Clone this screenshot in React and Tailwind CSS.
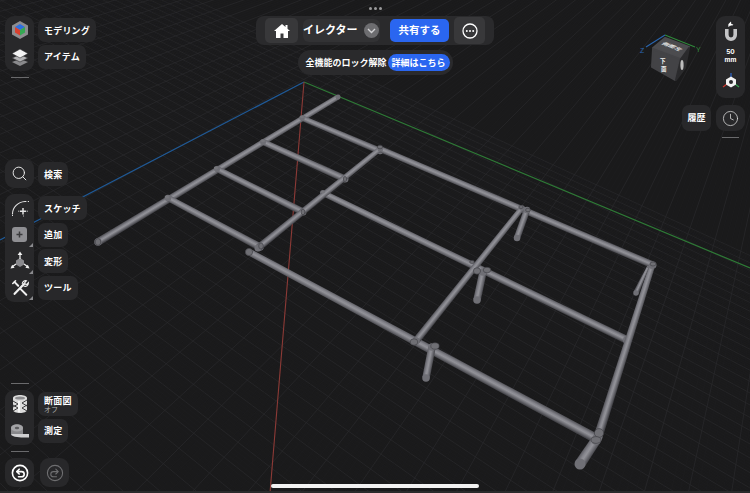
import React from "react";
import { Search, Clock } from "lucide-react";

const JP = "font-['Inter','Noto_Sans_CJK_JP',sans-serif]";

// vanishing points read off the beams
const VP_G = [-1121, -606];
const VP_B = [841, -210];
const DIR = [0.98, 0.198];

function gridLines(vp, spacing, count) {
  return Array.from({ length: count * 2 + 1 }, (_, i) => {
    const k = i - count;
    const px = 375 + k * spacing * DIR[0];
    const py = 640 + k * spacing * DIR[1];
    const ex = vp[0] + (px - vp[0]) * 1.6;
    const ey = vp[1] + (py - vp[1]) * 1.6;
    return { k, x1: vp[0], y1: vp[1], x2: ex, y2: ey };
  });
}

function Tube({ id, a, b, w1, w2 }) {
  const dx = b[0] - a[0];
  const dy = b[1] - a[1];
  const len = Math.hypot(dx, dy);
  const nx = -dy / len;
  const ny = dx / len;
  const s = ny > 0 ? -1 : 1;
  const w = (w1 + w2) / 2;
  const mx = (a[0] + b[0]) / 2;
  const my = (a[1] + b[1]) / 2;
  const pts = [
    [a[0] + (nx * w1) / 2, a[1] + (ny * w1) / 2],
    [b[0] + (nx * w2) / 2, b[1] + (ny * w2) / 2],
    [b[0] - (nx * w2) / 2, b[1] - (ny * w2) / 2],
    [a[0] - (nx * w1) / 2, a[1] - (ny * w1) / 2],
  ];
  return (
    <g>
      <linearGradient
        id={id}
        gradientUnits="userSpaceOnUse"
        x1={mx + (nx * s * w) / 2}
        y1={my + (ny * s * w) / 2}
        x2={mx - (nx * s * w) / 2}
        y2={my - (ny * s * w) / 2}
      >
        <stop offset="0" stopColor="#5c5c62" />
        <stop offset="0.3" stopColor="#85858c" />
        <stop offset="0.5" stopColor="#929298" />
        <stop offset="0.75" stopColor="#6e6e74" />
        <stop offset="1" stopColor="#47474c" />
      </linearGradient>
      <polygon points={pts.map((p) => p.join(",")).join(" ")} fill={`url(#${id})`} />
      <circle cx={a[0]} cy={a[1]} r={w1 / 2} fill="#6f6f75" />
      <circle cx={b[0]} cy={b[1]} r={w2 / 2} fill="#6f6f75" />
    </g>
  );
}

const tubes = [
  { a: [98, 242], b: [338, 97], w1: 7.5, w2: 5 },
  { a: [302, 118], b: [380, 151], w1: 5.5, w2: 6.5 },
  { a: [263, 142], b: [345, 179], w1: 6, w2: 7 },
  { a: [217, 169], b: [303, 212], w1: 6, w2: 7 },
  { a: [168, 198], b: [260, 247], w1: 6.5, w2: 7.5 },
  { a: [380, 149], b: [653, 265], w1: 6, w2: 7 },
  { a: [323, 193], b: [627, 340], w1: 6, w2: 8 },
  { a: [249, 252], b: [597, 439], w1: 7, w2: 9.5 },
  { a: [380, 149], b: [258, 248], w1: 5, w2: 7 },
  { a: [522, 208], b: [416, 341], w1: 5.5, w2: 7.5 },
  { a: [652, 266], b: [598, 437], w1: 6, w2: 9 },
  { a: [527, 210], b: [517, 238], w1: 6.5, w2: 6.5 },
  { a: [483, 272], b: [477, 300], w1: 7.5, w2: 7.5 },
  { a: [648, 267], b: [636, 293], w1: 2.5, w2: 5.5 },
  { a: [432, 347], b: [426, 378], w1: 7.5, w2: 7.5 },
  { a: [596, 440], b: [580, 464], w1: 10, w2: 11 },
];

const caps = [
  [98, 242, 2.8, 3.4], [249, 252, 3.6, 3.6], [261, 246, 2.3, 3], [303, 212, 1.8, 2.8],
  [345, 179, 1.6, 2.6], [380, 147, 2.6, 1.8], [477, 271, 3.6, 3.2], [487, 270, 3.8, 2.8],
  [528, 210, 2.4, 1.8], [521, 207, 2.2, 1.5], [472, 262, 2.4, 1.4], [653, 264, 3, 2],
  [414, 342, 3.8, 3.2], [435, 346, 4.2, 3.2], [599, 433, 4.6, 4.4], [596, 440, 5, 3.4],
];

// small joint marks, barely darker than the tube
const joints = [
  [302, 117, 2, 1.2], [263, 141, 2, 1.2], [216, 168, 2.2, 1.4], [167, 197, 2.4, 1.5], [323, 192, 2, 1.2],
];

function Scene() {
  const families = [VP_G, VP_B];
  return (
    <svg className="absolute inset-0" width="750" height="493" viewBox="0 0 750 493">
      {families.map((vp, f) =>
        gridLines(vp, 11, 200).map((l) => (
          <line
            key={`${f}-${l.k}`}
            x1={l.x1}
            y1={l.y1}
            x2={l.x2}
            y2={l.y2}
            stroke={l.k % 5 === 0 ? "#2a2a2c" : "#1f1f21"}
            strokeWidth={l.k % 5 === 0 ? 0.7 : 0.5}
          />
        ))
      )}
      <line x1="304" y1="82" x2="0" y2="240" stroke="#1f5a98" strokeWidth="1.2" />
      <line x1="304" y1="82" x2="750" y2="268" stroke="#2e7a36" strokeWidth="1.2" />
      <line x1="304" y1="82" x2="270" y2="493" stroke="#8c3a36" strokeWidth="1.1" />
      <g className="blur-[0.4px]">
        {tubes.map((t, i) => (
          <Tube key={i} id={`tube-${i}`} {...t} />
        ))}
        {joints.map(([x, y, rx, ry], i) => (
          <ellipse key={i} cx={x} cy={y} rx={rx} ry={ry} fill="#77777c" />
        ))}
        {caps.map(([x, y, rx, ry], i) => (
          <ellipse key={i} cx={x} cy={y} rx={rx} ry={ry} fill="#6f6f74" stroke="#3d3d41" strokeWidth="0.6" />
        ))}
      </g>
    </svg>
  );
}

function Cube() {
  return (
    <svg className="absolute left-[636px] top-[28px]" width="68" height="60" viewBox="636 28 68 60">
      <line x1="665" y1="35" x2="646" y2="47" stroke="#2a66b0" strokeWidth="1.1" />
      <line x1="665" y1="35" x2="695" y2="47" stroke="#2f8a3a" strokeWidth="1.1" />
      <text x="640" y="53" fontSize="7" fill="#2a66b0" fontFamily="Liberation Sans">Z</text>
      <text x="696" y="52" fontSize="7" fill="#2f8a3a" fontFamily="Liberation Sans">Y</text>
      <polygon points="665,38 689,47 680,58 653,48" fill="#4c4c4f" stroke="#4c4c4f" strokeWidth="2" strokeLinejoin="round" />
      <polygon points="653,49 680,59 675,80 652,67" fill="#434346" stroke="#434346" strokeWidth="2" strokeLinejoin="round" />
      <polygon points="681,59 689,48 685,68 676,80" fill="#2b2b2d" stroke="#2b2b2d" strokeWidth="2" strokeLinejoin="round" />
      <ellipse cx="682" cy="65" rx="1.6" ry="5" fill="#bdbdbd" />
      <text transform="matrix(0.95 0.36 -0.75 0.42 661 44)" fontSize="6.5" fontWeight="700" fill="#e8e8e8" fontFamily="Noto Sans CJK JP">側面左</text>
      <text transform="translate(660 63)" fontSize="5.5" fontWeight="700" fill="#efefef" fontFamily="Noto Sans CJK JP">下</text>
      <text transform="translate(661 71)" fontSize="5.5" fontWeight="700" fill="#efefef" fontFamily="Noto Sans CJK JP">面</text>
    </svg>
  );
}

function LogoIcon() {
  return (
    <svg width="18" height="20" viewBox="0 0 18 20">
      <polygon points="9,1 17,5.5 17,14.5 9,19 1,14.5 1,5.5" fill="#8d8d90" />
      <polygon points="9,4 14,7 9,10 4,7" fill="#2d6fe0" />
      <polygon points="4,7 9,10 9,15.5 4,12.5" fill="#d8402f" />
      <polygon points="14,7 9,10 9,15.5 14,12.5" fill="#35a853" />
    </svg>
  );
}

function LayersIcon() {
  return (
    <svg width="20" height="20" viewBox="0 0 20 20">
      <polygon points="10,12 18,15 10,19 2,15" fill="#8a8a8d" />
      <polygon points="10,7.5 18,11 10,15 2,11" fill="#b4b4b6" stroke="#2b2b2d" strokeWidth="0.6" />
      <polygon points="10,2 18,6.5 10,11 2,6.5" fill="#f4f4f4" stroke="#2b2b2d" strokeWidth="0.6" />
    </svg>
  );
}

function SketchIcon() {
  return (
    <svg width="20" height="20" viewBox="0 0 20 20" fill="none" stroke="#e4e4e4">
      <path d="M2.5 16 C2.5 9 8 4 15 3.5" strokeWidth="1.1" />
      <path d="M2.5 18v-2M15 3.5h4" strokeWidth="1" strokeDasharray="1.4 1.4" />
      <path d="M13 10v6.4M9.8 13.2h6.4" strokeWidth="1.5" />
      <path d="M8 13.2h1M17 13.2h2M13 18h1" strokeWidth="0.8" strokeDasharray="1 1" />
    </svg>
  );
}

function AddIcon() {
  return (
    <div className="w-[15px] h-[15px] rounded-[3px] bg-[#8f8f93] flex items-center justify-center">
      <svg width="9" height="9" viewBox="0 0 9 9" stroke="#3a3a3c" strokeWidth="1.5">
        <path d="M4.5 1.5v6M1.5 4.5h6" />
      </svg>
    </div>
  );
}

function TransformIcon() {
  return (
    <svg width="20" height="20" viewBox="0 0 20 20">
      <polygon points="10,7 14,9.5 14,13.5 10,16 6,13.5 6,9.5" fill="#8a8a8e" />
      <path d="M10 8V3M6 13l-4 3M14 13l4 3" stroke="#f2f2f2" strokeWidth="1.2" />
      <polygon points="10,0.5 12.4,4 7.6,4" fill="#f2f2f2" />
      <polygon points="0.5,17.5 2.2,13.8 4.6,16.8" fill="#f2f2f2" />
      <polygon points="19.5,17.5 17.8,13.8 15.4,16.8" fill="#f2f2f2" />
    </svg>
  );
}

function ToolsIcon() {
  return (
    <svg width="18" height="18" viewBox="0 0 20 20" fill="none" stroke="#f0f0f0" strokeLinecap="round">
      <path d="M4 16.5L14.5 5.5" strokeWidth="2.4" />
      <path d="M12.5 5a3.6 3.6 0 0 1 4.6-3l-2 2.2.8 1.6 1.8.2 1.6-1.8a3.6 3.6 0 0 1-5 3.6" strokeWidth="1.3" />
      <path d="M4 3.5l4 4M10.5 11l6.5 6.5" strokeWidth="2.2" />
      <path d="M2 5l3-3" strokeWidth="1.8" />
    </svg>
  );
}

function SectionIcon() {
  return (
    <svg width="16" height="20" viewBox="0 0 16 20">
      <path d="M1 4c0-4 14-4 14 0v12c0 4-14 4-14 0z" fill="#dcdcdc" />
      <path d="M1 7l5 3-5 3M1 11l5 3-5 3M15 6l-5 3 5 3M15 11l-5 3 5 3" stroke="#3a3a3c" strokeWidth="1" fill="none" />
      <path d="M7 7v11" stroke="#f6f6f6" strokeWidth="2" />
      <ellipse cx="8" cy="4" rx="5" ry="1.6" fill="#8c8c8f" />
    </svg>
  );
}

function MeasureIcon() {
  return (
    <svg width="20" height="16" viewBox="0 0 20 16">
      <path d="M1 5c0-5 12-5 12 0v6H1z" fill="#88888b" />
      <ellipse cx="7" cy="5" rx="6" ry="3.6" fill="#a4a4a7" />
      <ellipse cx="7" cy="5" rx="2.2" ry="1.2" fill="#5b5b5e" />
      <path d="M1 11c0 3.5 12 3.5 12 3.5h6V11H13z" fill="#cfcfd1" />
    </svg>
  );
}

function HistoryArrow({ color, flip, bold }) {
  return (
    <svg width="18" height="18" viewBox="0 0 18 18" fill="none" stroke={color} strokeWidth={bold ? 1.6 : 1.1} className={flip ? "-scale-x-100" : ""}>
      <circle cx="9" cy="9" r="7.6" />
      <path d="M6.2 7.6h4.4a2.6 2.6 0 0 1 0 5.2H7.5" strokeLinecap="round" />
      <path d="M8.2 5.2L5.8 7.6l2.4 2.4" strokeLinecap="round" strokeLinejoin="round" />
    </svg>
  );
}

function HomeIcon() {
  return (
    <svg width="18" height="16" viewBox="0 0 18 16">
      <path d="M9 1L1 8h2v7h4.5v-4.5h3V15H15V8h2l-2.5-2.2V2h-2v2L9 1z" fill="#fff" />
    </svg>
  );
}

function Corner() {
  return <span className="absolute right-[1px] bottom-[1px] w-0 h-0 border-l-[4px] border-l-transparent border-b-[4px] border-b-[#8a8a8d]" />;
}

function Label({ text, sub }) {
  return (
    <div className={`h-[24px] self-start rounded-[7px] bg-[#28282a] px-[6px] flex flex-col justify-center text-white ${JP}`}>
      <span className="text-[9px] leading-[11px] font-bold tracking-[0.2px] whitespace-nowrap">{text}</span>
      {sub && <span className="text-[7px] leading-[8px] text-[#b5b5b5]">{sub}</span>}
    </div>
  );
}

function ToolGroup({ items }) {
  return (
    <div className="flex gap-1">
      <div className="w-[29px] rounded-[9px] bg-[#28282a] flex flex-col py-[1px]">
        {items.map((it) => (
          <div key={it.label} className="relative h-[26.5px] flex items-center justify-center">
            {it.icon}
            {it.corner && <Corner />}
          </div>
        ))}
      </div>
      <div className="flex flex-col gap-[2.5px] pt-[2px]">
        {items.map((it) => (
          <Label key={it.label} text={it.label} sub={it.sub} />
        ))}
      </div>
    </div>
  );
}

function Divider() {
  return <div className="ml-[6px] w-[18px] h-[1px] bg-[#6a6a6c]" />;
}

function LeftColumn() {
  return (
    <div className="absolute left-[5px] top-[16px] bottom-[6px] flex flex-col">
      <ToolGroup
        items={[
          { label: "モデリング", icon: <LogoIcon /> },
          { label: "アイテム", icon: <LayersIcon /> },
        ]}
      />
      <div className="mt-[6px]"><Divider /></div>
      <div className="mt-[81px] flex gap-1">
        <div className="w-[29px] h-[29px] rounded-[9px] bg-[#28282a] flex items-center justify-center">
          <Search size={17} strokeWidth={1.4} color="#e6e6e6" />
        </div>
        <div className="pt-[3px]"><Label text="検索" /></div>
      </div>
      <div className="mt-[6px]">
        <ToolGroup
          items={[
            { label: "スケッチ", icon: <SketchIcon /> },
            { label: "追加", icon: <AddIcon />, corner: true },
            { label: "変形", icon: <TransformIcon />, corner: true },
            { label: "ツール", icon: <ToolsIcon />, corner: true },
          ]}
        />
      </div>
      <div className="mt-auto flex flex-col">
        <Divider />
        <div className="mt-[6px]">
          <ToolGroup
            items={[
              { label: "断面図", sub: "オフ", icon: <SectionIcon /> },
              { label: "測定", icon: <MeasureIcon /> },
            ]}
          />
        </div>
        <div className="mt-[6px]"><Divider /></div>
        <div className="mt-[6px] flex gap-[6px]">
          <div className="w-[29px] h-[29px] rounded-[9px] bg-[#28282a] flex items-center justify-center">
            <HistoryArrow color="#ffffff" bold />
          </div>
          <div className="w-[29px] h-[29px] rounded-[9px] bg-[#28282a] flex items-center justify-center">
            <HistoryArrow color="#6f6f71" flip />
          </div>
        </div>
      </div>
    </div>
  );
}

function TopCenter() {
  return (
    <div className={`absolute left-[256px] top-[6px] w-[238px] flex flex-col items-center ${JP}`}>
      <div className="flex gap-[2px] h-[4px] items-center">
        <span className="w-[3px] h-[3px] rounded-full bg-[#9a9a9c]" />
        <span className="w-[3px] h-[3px] rounded-full bg-[#9a9a9c]" />
        <span className="w-[3px] h-[3px] rounded-full bg-[#9a9a9c]" />
      </div>
      <div className="mt-[6px] w-full h-[29px] rounded-[8px] bg-[#2a2a2c] flex items-center pl-[9px] pr-[8px]">
        <div className="w-[33px] h-[25px] rounded-[5px] bg-[#38383a] flex items-center justify-center">
          <HomeIcon />
        </div>
        <div className="ml-[5px] w-[77px] h-[23px] rounded-[6px] bg-[#323234] flex items-center justify-between pr-[1px] text-white text-[11px] font-bold">
          <span className="whitespace-nowrap">イレクター</span>
          <span className="w-[15px] h-[15px] rounded-full bg-[#6d6d70] flex items-center justify-center">
            <svg width="9" height="6" viewBox="0 0 9 6" fill="none" stroke="#d4d4d6" strokeWidth="1.4">
              <path d="M1 1l3.5 3.5L8 1" />
            </svg>
          </span>
        </div>
        <div className="ml-[10px] w-[59px] h-[23px] rounded-[5px] bg-[#2a66f0] flex items-center justify-center text-white text-[10.5px] font-bold">
          共有する
        </div>
        <div className="ml-[5px] w-[31px] h-[27px] rounded-[5px] bg-[#38383a] flex items-center justify-center">
          <svg width="16" height="16" viewBox="0 0 16 16">
            <circle cx="8" cy="8" r="7" fill="none" stroke="#fff" strokeWidth="1.3" />
            <circle cx="4.8" cy="8" r="1" fill="#fff" />
            <circle cx="8" cy="8" r="1" fill="#fff" />
            <circle cx="11.2" cy="8" r="1" fill="#fff" />
          </svg>
        </div>
      </div>
      <div className="mt-[5px] h-[25px] w-[155px] rounded-full bg-[#2a2a2c] flex items-center pl-[8px] pr-[3px] justify-between text-white text-[9px] font-semibold">
        <span className="whitespace-nowrap">全機能のロック解除</span>
        <span className="h-[17px] w-[62px] rounded-full bg-[#2a66f0] flex items-center justify-center whitespace-nowrap">詳細はこちら</span>
      </div>
    </div>
  );
}

function RightColumn() {
  return (
    <div className={`absolute right-[5px] top-[16px] flex flex-col items-end ${JP}`}>
      <div className="w-[29px] h-[82px] rounded-[9px] bg-[#28282a] flex flex-col items-center pt-[5px] text-white">
        <svg width="16" height="22" viewBox="0 0 16 22" fill="none">
          <path d="M2 8v6a6 6 0 0 0 12 0V8h-3.6v6a2.4 2.4 0 0 1-4.8 0V8z" fill="#c4c4c6" />
          <path d="M5.5 5.5A3 3 0 0 1 10 4" stroke="#fff" strokeWidth="1.2" />
          <path d="M8 0.5l-3 3 3.5 1.5z" fill="#fff" />
        </svg>
        <span className="mt-[5px] text-[6.5px] leading-[8px] font-bold">50</span>
        <span className="text-[6.5px] leading-[8px] font-bold">mm</span>
        <svg className="mt-[8px]" width="18" height="18" viewBox="0 0 18 18" fill="none">
          <path d="M9 7V1" stroke="#2a66d0" strokeWidth="1.2" />
          <path d="M5 12l-4 3" stroke="#d03a30" strokeWidth="1.2" />
          <path d="M13 12l4 3" stroke="#35a050" strokeWidth="1.2" />
          <polygon points="9,4.5 14,7.5 14,12.5 9,15.5 4,12.5 4,7.5" fill="#f2f2f2" />
          <circle cx="9" cy="10" r="2" fill="#2a2a2c" />
        </svg>
      </div>
      <div className="mt-[7px] flex gap-[5px]">
        <div className="w-[29px] h-[26px] rounded-[7px] bg-[#28282a] flex items-center justify-center text-white text-[9px] font-bold">
          履歴
        </div>
        <div className="w-[29px] h-[26px] rounded-[9px] bg-[#28282a] flex items-center justify-center">
          <Clock size={17} strokeWidth={1.1} color="#d8d8d8" />
        </div>
      </div>
      <div className="mt-[6px] mr-[6px] w-[17px] h-[1px] bg-[#6a6a6c]" />
    </div>
  );
}

export default function App() {
  return (
    <div className="relative w-[750px] h-[493px] overflow-hidden bg-[#1a1a1b]">
      <Scene />
      <Cube />
      <LeftColumn />
      <TopCenter />
      <RightColumn />
      <div className="absolute left-[271px] bottom-[5px] w-[208px] h-[4px] rounded-full bg-[#f2f2f2]" />
      <div className="absolute inset-x-0 bottom-0 h-[2px] bg-[#2a2a2b]" />
    </div>
  );
}
